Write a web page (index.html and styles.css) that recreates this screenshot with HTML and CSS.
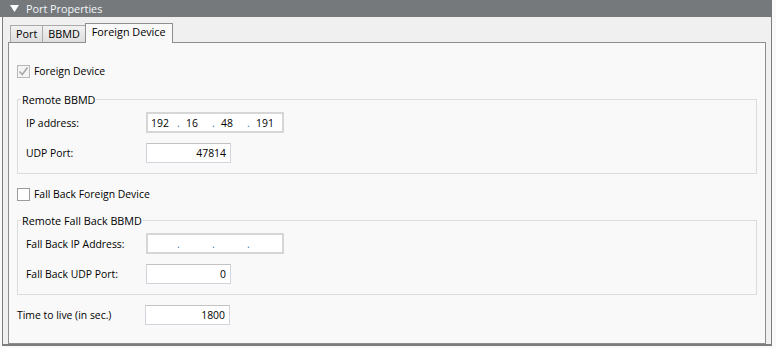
FILE: index.html
```html
<!DOCTYPE html>
<html>
<head>
<meta charset="utf-8">
<link rel="stylesheet" href="styles.css">
</head>
<body>
<div class="props">
  <div class="hdr">
    <svg class="tri" width="9" height="7" viewBox="0 0 9 7"><path d="M0 0H9L4.5 7Z" fill="#ffffff"/></svg>
    <span>Port Properties</span>
  </div>
  <div class="outer">
    <div class="tabs">
      <div class="tab">Port</div>
      <div class="tab">BBMD</div>
      <div class="tab active">Foreign Device</div>
    </div>
    <div class="panel">
      <label class="chk first">
        <span class="box disabled"><svg width="11" height="11" viewBox="0 0 11 11"><path d="M1.5 5.5L4.3 8.5L9.5 1.5" fill="none" stroke="#a8a8a8" stroke-width="1.6"/></svg></span>
        <span>Foreign Device</span>
      </label>
      <fieldset class="grp g1">
        <legend>Remote BBMD</legend>
        <div class="rows">
          <div class="row">
            <span class="lbl">IP address:</span>
            <div class="ip">
              <span class="oct">192</span><span class="dot">.</span><span class="oct">16</span><span class="dot">.</span><span class="oct">48</span><span class="dot">.</span><span class="oct">191</span>
            </div>
          </div>
          <div class="row">
            <span class="lbl">UDP Port:</span>
            <div class="num">47814</div>
          </div>
        </div>
      </fieldset>
      <label class="chk second">
        <span class="box"></span>
        <span>Fall Back Foreign Device</span>
      </label>
      <fieldset class="grp g2">
        <legend>Remote Fall Back BBMD</legend>
        <div class="rows">
          <div class="row">
            <span class="lbl">Fall Back IP Address:</span>
            <div class="ip">
              <span class="oct"></span><span class="dot">.</span><span class="oct"></span><span class="dot">.</span><span class="oct"></span><span class="dot">.</span><span class="oct"></span>
            </div>
          </div>
          <div class="row">
            <span class="lbl">Fall Back UDP Port:</span>
            <div class="num">0</div>
          </div>
        </div>
      </fieldset>
      <div class="row ttl">
        <span class="lbl">Time to live (in sec.)</span>
        <div class="num">1800</div>
      </div>
    </div>
  </div>
</div>
</body>
</html>
```
FILE: styles.css
```css
html, body {
  margin: 0;
  padding: 0;
  background: #f9f9f9;
}
body {
  font-family: "Open Sans", "Noto Sans", sans-serif;
  font-size: 10.4px;
  color: #000;
}
.props {
  width: 772px;
}
.hdr {
  height: 17px;
  background: #75797c;
  color: #f2f6fa;
  display: flex;
  align-items: center;
  font-size: 10.8px;
}
.tri {
  margin-left: 10px;
  margin-right: 7px;
}
.outer {
  background: #f0f0f0;
  border-left: 1px solid #7d7d7d;
  border-right: 1px solid #7d7d7d;
  border-bottom: 2px solid #7d7d7d;
  margin-left: 2px;
  padding: 6px 5px 0 5px;
}
.tabs {
  display: flex;
  align-items: flex-end;
  padding-left: 2px;
  height: 19px;
}
.tab {
  height: 17px;
  box-sizing: border-box;
  border: 1px solid #a9a9a9;
  border-bottom: none;
  background: linear-gradient(#f2f2f2, #dedede);
  padding: 0 5px;
  line-height: 16px;
  font-size: 10.8px;
  margin-right: -1px;
}
.tab.active {
  background: #f9f9f9;
  border-color: #8e8e8e;
  padding: 0 6px;
  position: relative;
  margin-bottom: -1px;
  height: 20px;
  z-index: 1;
}
.panel {
  background: #f9f9f9;
  border: 1px solid #8e8e8e;
  height: 300px;
  padding: 0 8px;
}
.chk {
  display: flex;
  align-items: center;
  gap: 4px;
}
.chk.first {
  margin-top: 21px;
}
.chk.second {
  margin-top: 13px;
}
.box {
  width: 11px;
  height: 11px;
  border: 1px solid #9c9c9c;
  background: #fff;
  display: flex;
}
.box.disabled {
  background: #f4f4f4;
  border-color: #b8b8b8;
}
.grp {
  margin: 0;
  padding: 0;
  border: 1px solid #dcdcdc;
  min-width: 0;
}
.g1 {
  margin-top: 14px;
}
.g2 {
  margin-top: 12px;
}
.grp legend {
  margin-left: 3px;
  padding: 0 1px;
  font-size: 10.8px;
}
.rows {
  padding: 5px 8px 10px 8px;
  display: flex;
  flex-direction: column;
  gap: 10px;
}
.row {
  display: flex;
  align-items: center;
}
.lbl {
  width: 120px;
}
.ip {
  width: 131px;
  height: 17px;
  border: 2px solid #d6d6d6;
  background: #fff;
  display: flex;
  align-items: center;
  padding-left: 3px;
}
.oct {
  width: 22px;
  margin-right: 4px;
}
.dot {
  color: #3b78b8;
  width: 9px;
}
.num {
  width: 79px;
  height: 18px;
  border: 1px solid #d2d6dc;
  border-top-color: #c2c2c2;
  background: #fff;
  text-align: right;
  padding-right: 4px;
  line-height: 18px;
}
.ttl {
  margin-top: 10px;
}
.ttl .lbl {
  width: 128px;
}
```
